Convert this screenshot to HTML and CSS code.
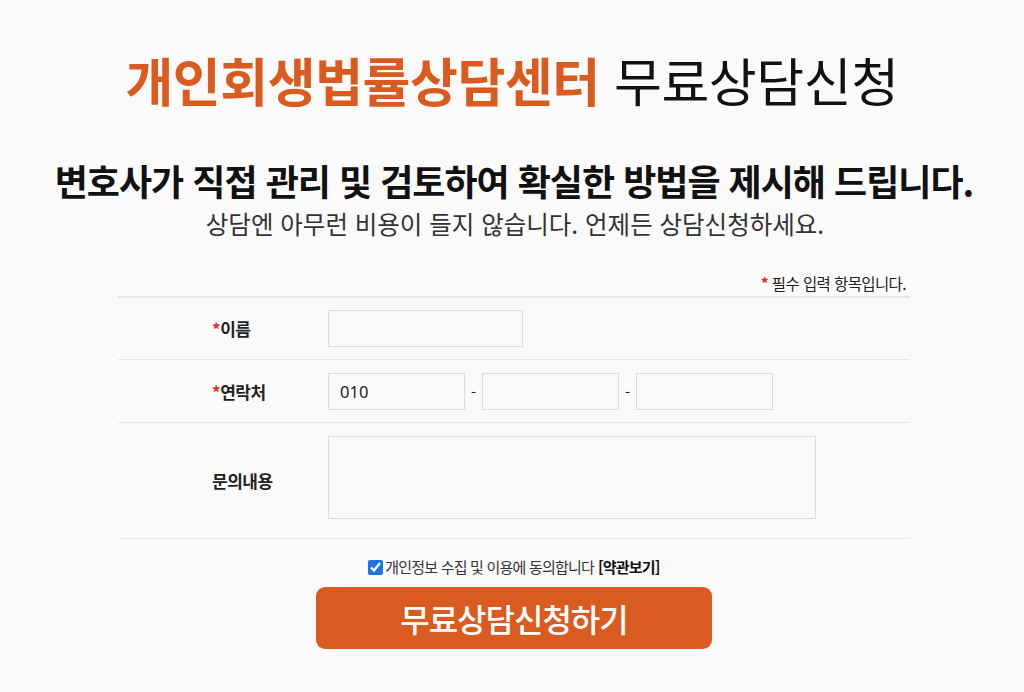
FILE: index.html
```html
<!DOCTYPE html>
<html lang="ko">
<head>
<meta charset="utf-8">
<link rel="stylesheet" href="styles.css">
</head>
<body>
<div class="page">
  <h1 class="title"><span class="brand">개인회생법률상담센터</span> 무료상담신청</h1>
  <p class="lead">변호사가 직접 관리 및 검토하여 확실한 방법을 제시해 드립니다.</p>
  <p class="sub">상담엔 아무런 비용이 들지 않습니다. 언제든 상담신청하세요.</p>
  <form class="form">
    <div class="req-note"><span class="star">*</span> 필수 입력 항목입니다.</div>
    <div class="table">
      <div class="row first">
        <div class="label"><span class="star">*</span>이름</div>
        <div class="field"><input class="input name" type="text"></div>
      </div>
      <div class="row">
        <div class="label"><span class="star">*</span>연락처</div>
        <div class="field phone">
          <input class="input tel" type="text" value="010">
          <span class="dash">-</span>
          <input class="input tel" type="text">
          <span class="dash">-</span>
          <input class="input tel" type="text">
        </div>
      </div>
      <div class="row tall">
        <div class="label">문의내용</div>
        <div class="field top"><textarea class="textarea"></textarea></div>
      </div>
    </div>
    <label class="agree"><input type="checkbox" class="check" checked>개인정보 수집 및 이용에 동의합니다 <b>[약관보기]</b></label>
    <div class="btn-wrap"><button type="button" class="submit">무료상담신청하기</button></div>
  </form>
</div>
</body>
</html>
```

FILE: styles.css
```css
* { box-sizing: border-box; }
html, body { margin: 0; padding: 0; background: #fafafa; }
body {
  font-family: "Noto Sans CJK KR", "Noto Sans", sans-serif;
  color: #111;
}
.page {
  width: 1024px;
  height: 692px;
  padding-top: 45px;
  display: flex;
  flex-direction: column;
  align-items: center;
}
.title {
  margin: 0;
  font-size: 52px;
  line-height: 70px;
  font-weight: 400;
  letter-spacing: -0.4px;
  color: #111;
}
.brand { color: #d95b20; font-weight: 700; }
.lead {
  margin: 43px 0 0 4px;
  font-size: 36px;
  line-height: 44px;
  font-weight: 700;
  letter-spacing: -1px;
  color: #111;
}
.sub {
  margin: 6px 0 0 6px;
  font-size: 24.5px;
  line-height: 32px;
  font-weight: 400;
  color: #333;
}
.form {
  width: 792px;
  margin: 33px 0 0 4px;
  display: flex;
  flex-direction: column;
}
.req-note {
  align-self: flex-end;
  margin-right: 4px;
  font-size: 15.5px;
  line-height: 20px;
  letter-spacing: -0.6px;
  color: #222;
  padding-bottom: 3px;
}
.star { color: #e8262b; font-weight: 700; }
.table { border-top: 2px solid #e6e6e6; }
.row {
  display: flex;
  align-items: center;
  height: 63px;
  border-bottom: 1px solid #e6e6e6;
}
.row.first { height: 62px; }
.row.tall { height: 116px; }
.label {
  width: 210px;
  padding-left: 94px;
  font-size: 17px;
  font-weight: 700;
  letter-spacing: -0.5px;
  color: #222;
}
.field { display: flex; align-items: center; }
.field.top { align-self: flex-start; margin-top: 13px; }
.input {
  height: 37px;
  border: 1px solid #dcdcdc;
  background: #fafafa;
  font-family: "Noto Sans", sans-serif;
  font-size: 16.5px;
  padding: 0 11px;
  color: #222;
  outline: none;
}
.name { width: 195px; }
.tel { width: 137px; }
.dash { width: 17px; text-align: center; font-size: 15px; color: #222; }
.textarea {
  width: 488px;
  height: 83px;
  border: 1px solid #dcdcdc;
  background: #fafafa;
  resize: none;
  outline: none;
  display: block;
}
.agree {
  align-self: center;
  margin-top: 18px;
  display: flex;
  align-items: center;
  font-size: 15px;
  line-height: 20px;
  letter-spacing: -0.8px;
  color: #333;
}
.agree b { font-weight: 700; color: #111; margin-left: 4px; }
.check {
  margin: 0 2px 0 0;
  width: 15px;
  height: 15px;
  accent-color: #1a73e8;
}
.btn-wrap { display: flex; justify-content: center; margin-top: 10px; }
.submit {
  width: 396px;
  height: 62px;
  border: none;
  border-radius: 9px;
  background: #d95b20;
  color: #fff;
  font-family: "Noto Sans CJK KR", sans-serif;
  font-size: 32px;
  font-weight: 500;
  letter-spacing: -1px;
}
```
